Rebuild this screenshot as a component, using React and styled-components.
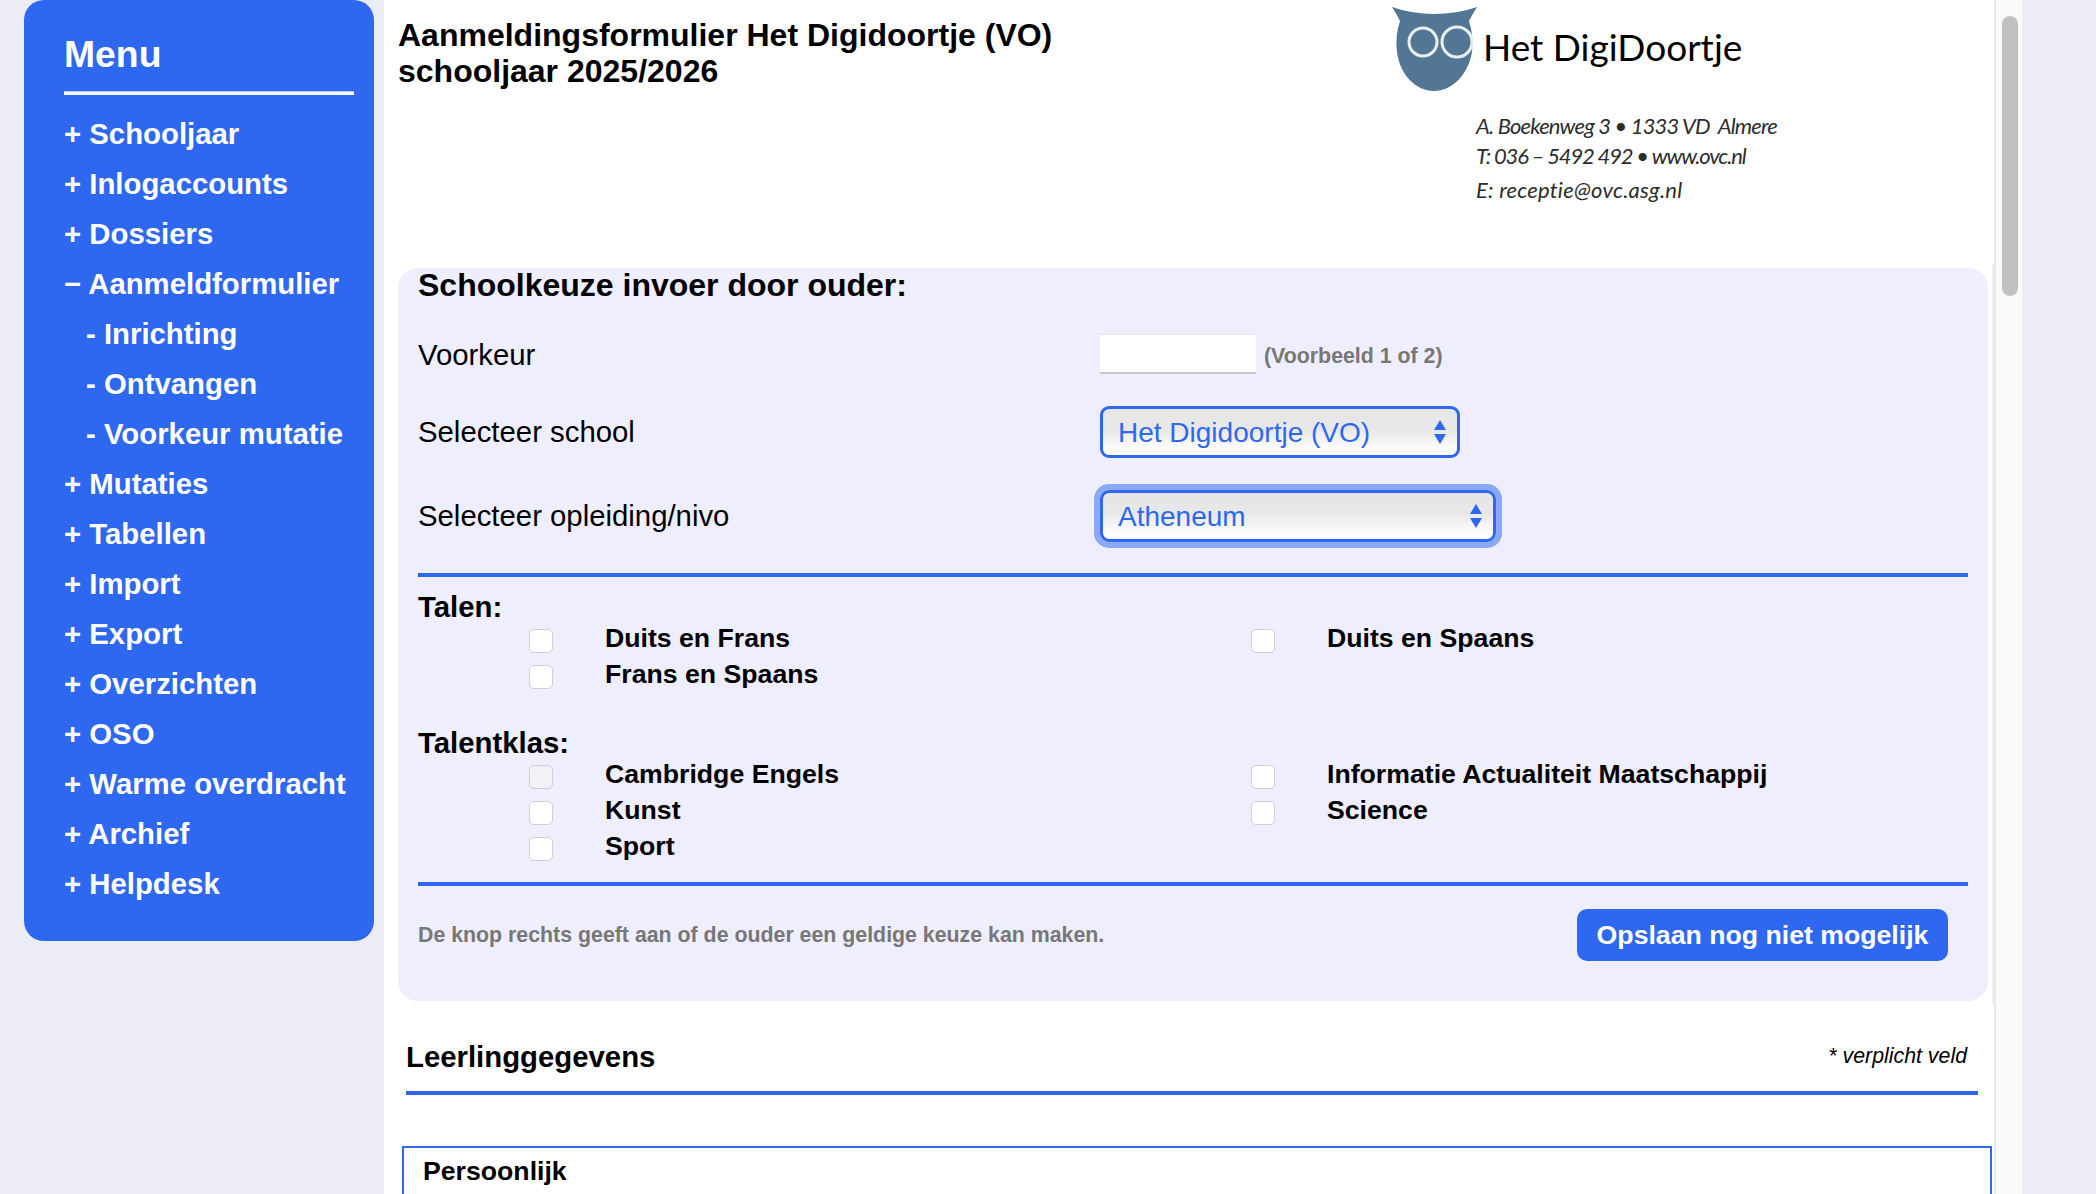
import React from "react";
import styled, { createGlobalStyle } from "styled-components";

const BLUE = "#2f68f0";

const menuItems = [
  { sign: "+", label: "Schooljaar" },
  { sign: "+", label: "Inlogaccounts" },
  { sign: "+", label: "Dossiers" },
  { sign: "−", label: "Aanmeldformulier" },
  { sign: "-", label: "Inrichting", sub: true },
  { sign: "-", label: "Ontvangen", sub: true },
  { sign: "-", label: "Voorkeur mutatie", sub: true },
  { sign: "+", label: "Mutaties" },
  { sign: "+", label: "Tabellen" },
  { sign: "+", label: "Import" },
  { sign: "+", label: "Export" },
  { sign: "+", label: "Overzichten" },
  { sign: "+", label: "OSO" },
  { sign: "+", label: "Warme overdracht" },
  { sign: "+", label: "Archief" },
  { sign: "+", label: "Helpdesk" },
];

const talen = [
  { label: "Duits en Frans" },
  { label: "Duits en Spaans" },
  { label: "Frans en Spaans" },
];

const talentklas = [
  { label: "Cambridge Engels", disabled: true },
  { label: "Informatie Actualiteit Maatschappij" },
  { label: "Kunst" },
  { label: "Science" },
  { label: "Sport" },
];

const addressLines = [
  { text: "A. Boekenweg 3 • 1333 VD  Almere", spacing: -0.84, height: 30 },
  { text: "T: 036 – 5492 492 • www.ovc.nl", spacing: -1.17, height: 34 },
  { text: "E: receptie@ovc.asg.nl", spacing: 0.24, height: 30 },
];

const GlobalStyle = createGlobalStyle`
  html, body {
    margin: 0;
    height: 1194px;
    overflow: hidden;
    background: #ecedf4;
    font-family: "Liberation Sans", Arial, sans-serif;
    color: #000;
  }
`;

const Page = styled.div`
  display: flex;
  height: 1194px;
  overflow: hidden;
  padding-left: 24px;
`;

const Sidebar = styled.nav`
  flex: none;
  box-sizing: border-box;
  width: 350px;
  height: 941px;
  padding: 31px 20px 0 40px;
  background: ${BLUE};
  border-radius: 20px;
  color: #fff;
`;

const MenuTitle = styled.div`
  font-size: 37.33px;
  font-weight: bold;
  line-height: 46px;
  height: 60px;
`;

const MenuRule = styled.hr`
  box-sizing: border-box;
  height: 4px;
  margin: 0;
  border: 0;
  border-top: 1px solid #b9c3da;
  background: #fff;
`;

const MenuList = styled.ul`
  list-style: none;
  margin: 14px 0 0;
  padding: 0;
`;

const MenuItem = styled.li`
  font-size: 29.33px;
  font-weight: bold;
  line-height: 50px;
  white-space: nowrap;
  padding-left: ${(props) => (props.$sub ? "22px" : "0")};
`;

const Main = styled.main`
  flex: none;
  box-sizing: border-box;
  width: 1610px;
  height: 1194px;
  margin-left: 10px;
  padding-left: 14px;
  background: #fff;
  overflow: hidden;
`;

const Header = styled.header`
  display: flex;
  height: 264px;
`;

const Title = styled.h1`
  width: 994px;
  margin: 0;
  padding-top: 17px;
  font-size: 32px;
  line-height: 36px;
  font-weight: bold;
`;

const Logo = styled.div`
  display: flex;
  flex-direction: column;
  padding-top: 7px;
`;

const LogoTop = styled.div`
  display: flex;
  align-items: center;
  gap: 5px;
  height: 85px;
`;

const LogoName = styled.div`
  font-family: Lato, sans-serif;
  font-size: 37px;
  line-height: 44px;
  margin-top: -6px;
  white-space: nowrap;
`;

const Address = styled.div`
  margin: 19px 0 0 84px;
  font-family: Lato, sans-serif;
  font-style: italic;
  font-size: 22px;
  color: #2c2c2c;
`;

const AddressLine = styled.div`
  height: ${(props) => props.$height}px;
  line-height: 30px;
  letter-spacing: ${(props) => props.$spacing}px;
  white-space: pre;
`;

const PanelBand = styled.div`
  box-sizing: border-box;
  height: 741px;
  padding-top: 4px;
  border-right: 2px solid #eeeef8;
`;

const Panel = styled.section`
  box-sizing: border-box;
  width: 1590px;
  height: 733px;
  padding: 0 20px;
  background: #eeeefe;
  border-radius: 20px;
`;

const PanelTitle = styled.h2`
  margin: 0;
  font-size: 32px;
  line-height: 34px;
  font-weight: bold;
`;

const Fields = styled.div`
  display: flex;
  flex-direction: column;
  gap: 32px;
  margin-top: 32px;
`;

const Field = styled.div`
  display: flex;
  align-items: center;
`;

const FieldLabel = styled.label`
  box-sizing: border-box;
  width: 682px;
  padding-top: ${(props) => props.$nudge || 0}px;
  font-size: 29.33px;
  line-height: 36px;
`;

const TextInput = styled.input`
  box-sizing: border-box;
  width: 156px;
  height: 40px;
  padding: 0 8px;
  background: #fff;
  border: 0;
  border-top: 1px solid #e6e6ee;
  border-bottom: 2px solid #c8c8cc;
  outline: 0;
`;

const Hint = styled.span`
  margin-left: 8px;
  padding-top: 5px;
  font-size: 21.33px;
  font-weight: bold;
  color: #777;
`;

const SelectWrap = styled.div`
  position: relative;
  width: ${(props) => props.$width}px;
`;

const Select = styled.select`
  appearance: none;
  box-sizing: border-box;
  display: block;
  width: 100%;
  height: 52px;
  padding: 0 15px;
  border: 3px solid ${BLUE};
  border-radius: 9px;
  background: linear-gradient(#e6e6e6 0%, #e8e8e8 45%, #fff 90%);
  color: ${BLUE};
  font-family: "Liberation Sans", Arial, sans-serif;
  font-size: 28px;
  outline: 0;
  box-shadow: ${(props) => (props.$focused ? "0 0 0 6px #8ba9f6" : "none")};
`;

const SelectArrows = styled.svg`
  position: absolute;
  top: 14px;
  right: 13px;
  width: 14px;
  height: 24px;
  fill: ${BLUE};
  pointer-events: none;
`;

const Rule = styled.div`
  height: 4px;
  margin-top: ${(props) => props.$top}px;
  background: ${BLUE};
`;

const GroupTitle = styled.div`
  font-size: 29.33px;
  font-weight: bold;
  line-height: 36px;
  margin-top: ${(props) => props.$top}px;
`;

const OptionGrid = styled.div`
  display: grid;
  grid-template-columns: 722px 1fr;
  grid-auto-rows: 36px;
  margin-top: -5px;
`;

const Option = styled.label`
  display: flex;
  align-items: center;
  padding-left: 111px;
  font-size: 26.67px;
  font-weight: bold;
  white-space: nowrap;
`;

const Check = styled.input`
  appearance: none;
  box-sizing: border-box;
  flex: none;
  width: 24px;
  height: 24px;
  margin: 5px 52px 0 0;
  border: 1px solid #cfcfd6;
  border-radius: 5px;
  background: ${(props) => (props.disabled ? "#f1f1f8" : "#fff")};
`;

const Footer = styled.div`
  display: flex;
  align-items: center;
  justify-content: space-between;
  margin-top: 23px;
  padding-right: 20px;
`;

const FooterNote = styled.span`
  font-size: 21.33px;
  font-weight: bold;
  color: #777;
`;

const SaveButton = styled.button`
  box-sizing: border-box;
  width: 371px;
  height: 52px;
  padding: 0;
  border: 0;
  border-radius: 10px;
  background: ${BLUE};
  color: #fff;
  font-family: "Liberation Sans", Arial, sans-serif;
  font-size: 26.67px;
  font-weight: bold;
`;

const SectionHead = styled.div`
  display: flex;
  align-items: center;
  justify-content: space-between;
  box-sizing: border-box;
  width: 1572px;
  height: 90px;
  margin-left: 8px;
  padding: 17px 11px 0 0;
  border-bottom: 4px solid ${BLUE};
`;

const SectionTitle = styled.h2`
  margin: 0;
  font-size: 29.33px;
  line-height: 36px;
  font-weight: bold;
`;

const Required = styled.span`
  font-size: 21.33px;
  font-style: italic;
`;

const PersonalBox = styled.fieldset`
  box-sizing: border-box;
  width: 1590px;
  height: 200px;
  margin: 51px 0 0 4px;
  padding: 7px 19px;
  border: 2px solid ${BLUE};
`;

const BoxTitle = styled.div`
  font-size: 26.67px;
  font-weight: bold;
  line-height: 32px;
`;

const ScrollTrack = styled.div`
  flex: none;
  box-sizing: border-box;
  width: 28px;
  height: 1194px;
  padding: 16px 3px 0 6px;
  background: #fafafa;
  border-left: 2px solid #e8e8e8;
`;

const ScrollThumb = styled.div`
  width: 16px;
  height: 280px;
  border-radius: 8px;
  background: #c1c1c1;
`;

const Owl = () => (
  <svg width="86" height="85" viewBox="0 0 86 85">
    <path
      fill="#527694"
      d="M0 0 Q20 7 42 7 Q65 7 85 0 Q80 8 77 14 Q82 30 80 45 C76 68 60 84 42 84 C24 84 8 68 5 45 Q3 28 8 14 Q4 6 0 0 Z"
    />
    <circle cx="31" cy="35" r="14" fill="none" stroke="#e8eef2" strokeWidth="3" />
    <circle cx="65" cy="35" r="15" fill="none" stroke="#e8eef2" strokeWidth="3" />
  </svg>
);

const Arrows = () => (
  <SelectArrows viewBox="0 0 14 24">
    <path d="M7 0 L13 10 H1 Z" />
    <path d="M7 24 L13 14 H1 Z" />
  </SelectArrows>
);

const OptionList = ({ items }) => (
  <OptionGrid>
    {items.map((item) => (
      <Option key={item.label}>
        <Check type="checkbox" disabled={item.disabled} />
        {item.label}
      </Option>
    ))}
  </OptionGrid>
);

const App = () => (
  <Page>
    <GlobalStyle />
    <Sidebar>
      <MenuTitle>Menu</MenuTitle>
      <MenuRule />
      <MenuList>
        {menuItems.map((item) => (
          <MenuItem key={item.label} $sub={item.sub}>
            {item.sign} {item.label}
          </MenuItem>
        ))}
      </MenuList>
    </Sidebar>

    <Main>
      <Header>
        <Title>
          Aanmeldingsformulier Het Digidoortje (VO)
          <br />
          schooljaar 2025/2026
        </Title>
        <Logo>
          <LogoTop>
            <Owl />
            <LogoName>Het DigiDoortje</LogoName>
          </LogoTop>
          <Address>
            {addressLines.map((line) => (
              <AddressLine key={line.text} $spacing={line.spacing} $height={line.height}>
                {line.text}
              </AddressLine>
            ))}
          </Address>
        </Logo>
      </Header>

      <PanelBand>
        <Panel>
          <PanelTitle>Schoolkeuze invoer door ouder:</PanelTitle>
          <Fields>
            <Field>
              <FieldLabel $nudge={2}>Voorkeur</FieldLabel>
              <TextInput type="text" />
              <Hint>(Voorbeeld 1 of 2)</Hint>
            </Field>
            <Field>
              <FieldLabel>Selecteer school</FieldLabel>
              <SelectWrap $width={360}>
                <Select defaultValue="vo">
                  <option value="vo">Het Digidoortje (VO)</option>
                </Select>
                <Arrows />
              </SelectWrap>
            </Field>
            <Field>
              <FieldLabel>Selecteer opleiding/nivo</FieldLabel>
              <SelectWrap $width={396}>
                <Select $focused defaultValue="ath">
                  <option value="ath">Atheneum</option>
                </Select>
                <Arrows />
              </SelectWrap>
            </Field>
          </Fields>
          <Rule $top={31} />

          <GroupTitle $top={12}>Talen:</GroupTitle>
          <OptionList items={talen} />

          <GroupTitle $top={33}>Talentklas:</GroupTitle>
          <OptionList items={talentklas} />

          <Rule $top={18} />
          <Footer>
            <FooterNote>De knop rechts geeft aan of de ouder een geldige keuze kan maken.</FooterNote>
            <SaveButton type="button">Opslaan nog niet mogelijk</SaveButton>
          </Footer>
        </Panel>
      </PanelBand>

      <SectionHead>
        <SectionTitle>Leerlinggegevens</SectionTitle>
        <Required>* verplicht veld</Required>
      </SectionHead>

      <PersonalBox>
        <BoxTitle>Persoonlijk</BoxTitle>
      </PersonalBox>
    </Main>

    <ScrollTrack>
      <ScrollThumb />
    </ScrollTrack>
  </Page>
);

export default App;
